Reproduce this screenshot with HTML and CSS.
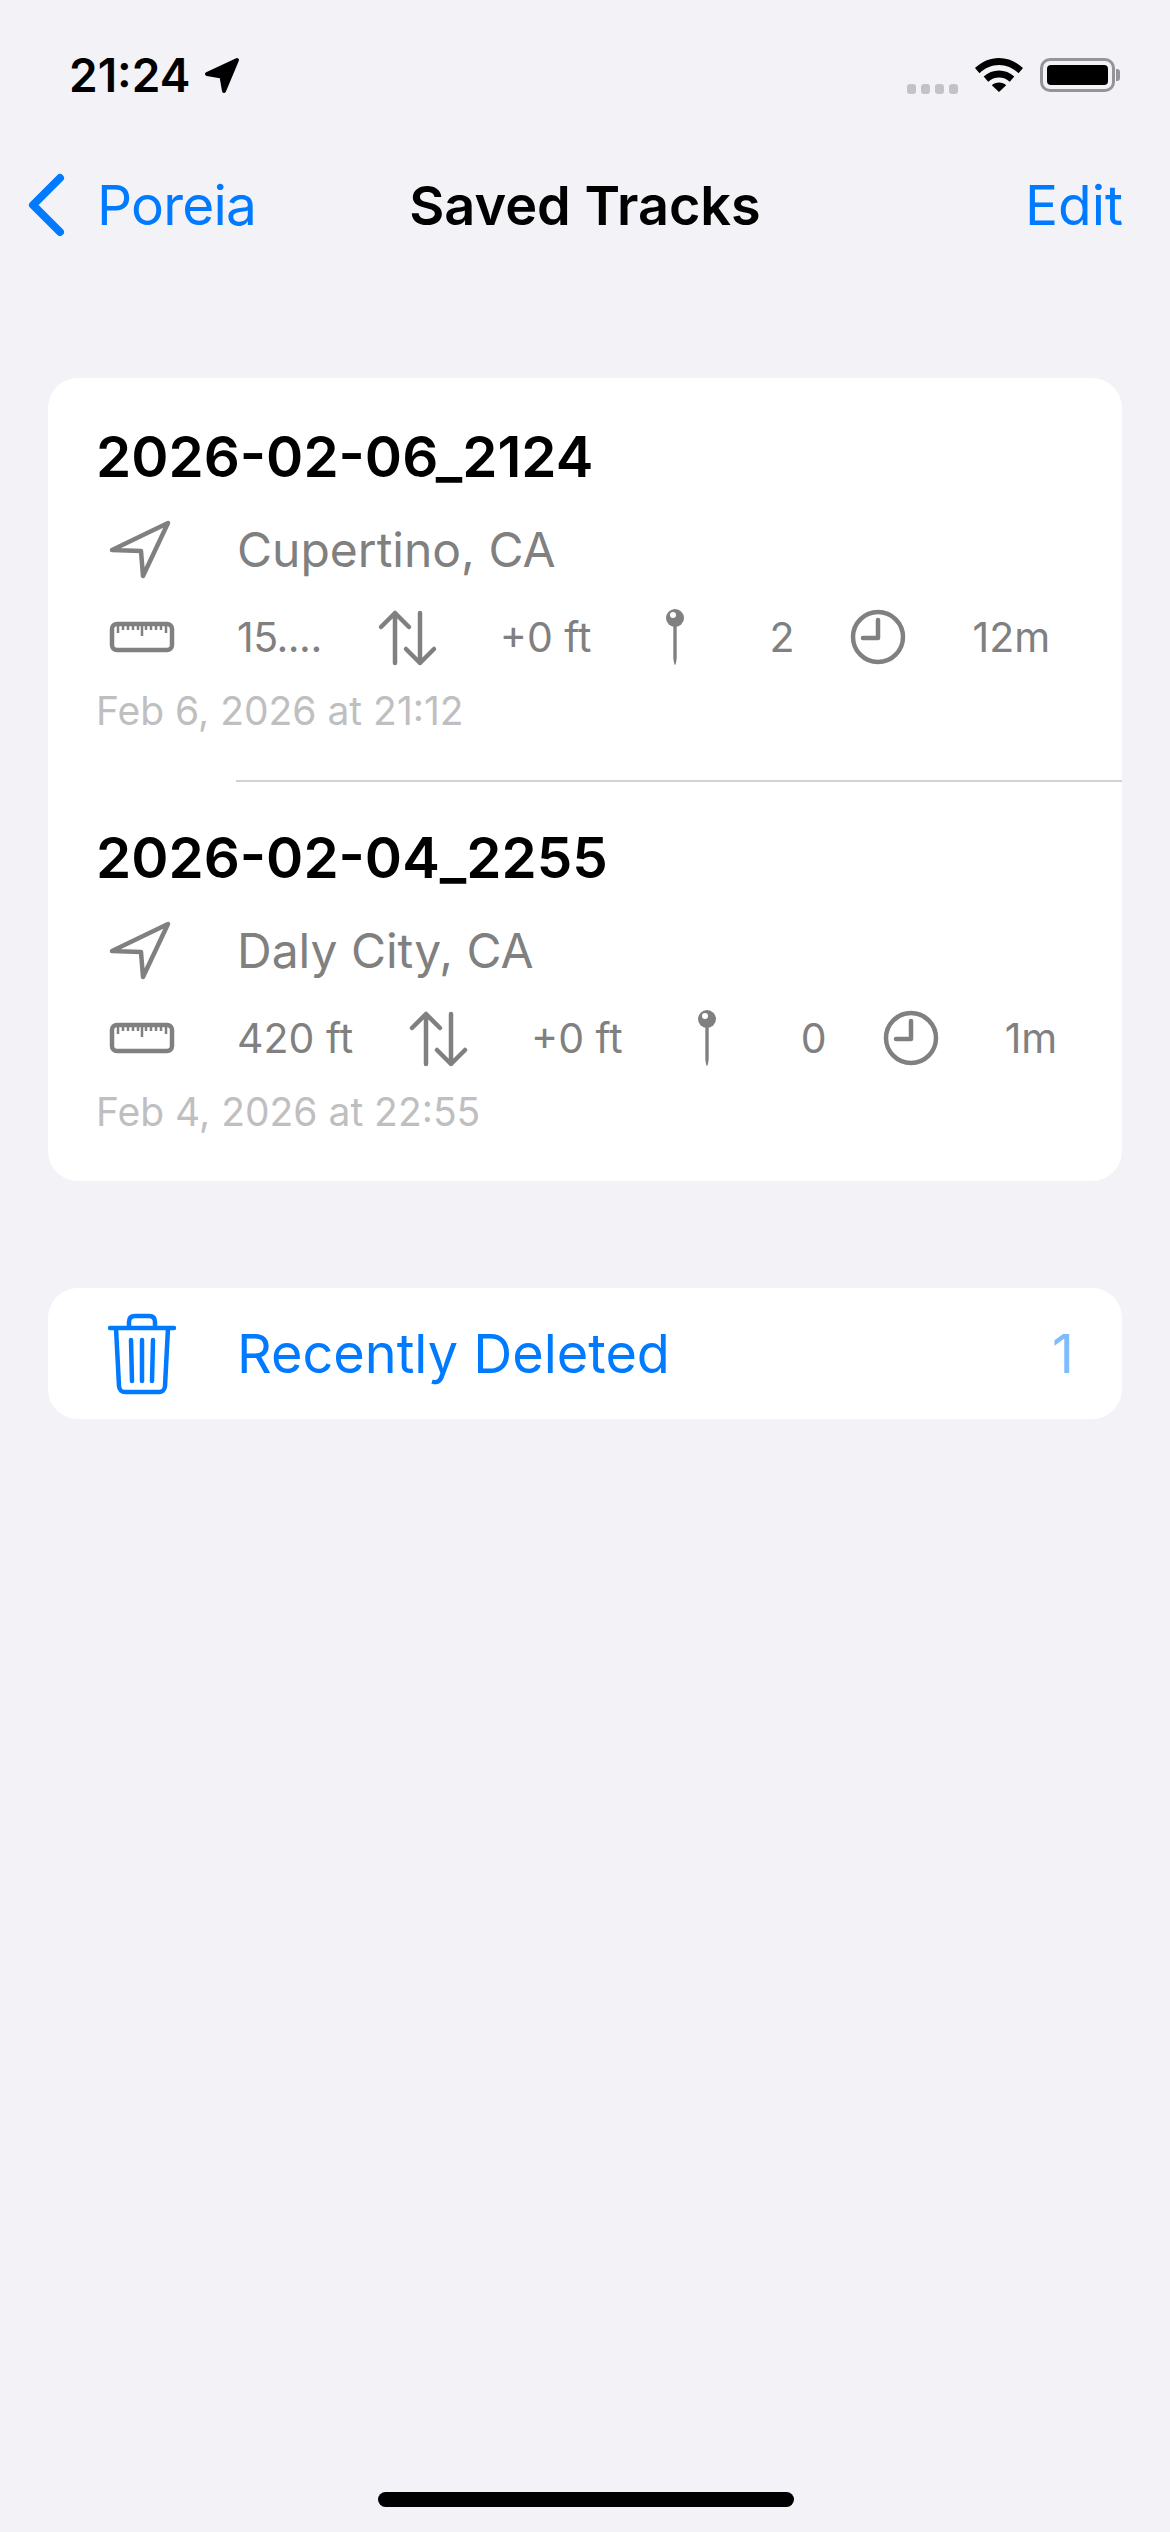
FILE: index.html
```html
<!DOCTYPE html>
<html lang="en">
<head>
  <meta charset="UTF-8">
  <meta name="viewport" content="width=device-width, initial-scale=1.0">
  <title>Saved Tracks</title>
  <link rel="stylesheet" href="styles.css">
</head>
<body>
  <div class="screen">
    <div class="status-bar">
      <div class="status-left">
        <span class="time">21:24</span>
        <svg class="status-arrow" viewBox="0 0 36 36"><path class="fill-black status-arrow-shape" d="M33 3 3 17l14.500 2.500L20 34Z"/></svg>
      </div>
      <div class="status-right">
        <div class="signal"><i></i><i></i><i></i><i></i></div>
        <svg class="wifi" viewBox="0 0 48 34">
          <path class="fill-black" d="M24 0C15 0 7 3.500 0 10l4.500 5.200C10 10 16.500 7 24 7s14 3 19.500 8.200L48 10C41 3.500 33 0 24 0Z"/>
          <path class="fill-black" d="M24 12.500c-5.800 0-11 2.200-15.300 6l4.500 5.200c3-2.700 6.700-4.200 10.800-4.200s7.800 1.500 10.800 4.200l4.500-5.200c-4.300-3.800-9.500-6-15.300-6Z"/>
          <path class="fill-black" d="M24 24.500c-2.800 0-5.300 1-7.200 2.800L24 34l7.200-6.700c-1.900-1.800-4.400-2.800-7.200-2.800Z"/>
        </svg>
        <div class="battery"><div class="battery-level"></div></div>
        <div class="battery-nub"></div>
      </div>
    </div>

    <div class="nav-bar">
      <div class="nav-back">
        <svg class="chevron" viewBox="0 0 39 64"><path class="stroke-blue" d="M33 5 6 32l27 27"/></svg>
        <span class="nav-back-label">Poreia</span>
      </div>
      <div class="nav-title">Saved Tracks</div>
      <div class="nav-edit">Edit</div>
    </div>

    <div class="content">
      <div class="card">
        <div class="track">
          <div class="track-name">2026-02-06_2124</div>
          <div class="track-place">
            <svg class="place-icon" viewBox="0 0 64 60"><path class="stroke-gray" d="M4 31 60 4 35 57 33 32Z"/></svg>
            <span>Cupertino, CA</span>
          </div>
          <div class="track-stats">
            <svg class="stat-icon" viewBox="0 0 64 60"><rect class="stroke-gray" x="2" y="17" width="60" height="26" rx="5"/><path class="stroke-gray thin" d="M8 18v8M13 18v5M18 18v5M23 18v5M28 18v5M32 18v11M36 18v5M41 18v5M46 18v5M51 18v5M56 18v8"/></svg>
            <span class="stat-text stat-clipped">15....</span>
            <svg class="stat-icon" viewBox="0 0 64 60"><path class="stroke-gray" d="M21 56V6M7 20 21 6l14 14M46 6v50M32 42l14 14 14-14"/></svg>
            <span class="stat-text">+0 ft</span>
            <svg class="stat-icon" viewBox="0 0 64 60"><circle class="fill-gray" cx="32" cy="11" r="9"/><circle class="fill-white" cx="30" cy="8" r="3"/><path class="fill-gray" d="M30.300 18h3.400v32c0 3-1 8-1.700 8s-1.700-5-1.700-8Z"/></svg>
            <span class="stat-text">2</span>
            <svg class="stat-icon" viewBox="0 0 64 60"><circle class="stroke-gray" cx="32" cy="30" r="25"/><path class="stroke-gray" d="M32 13v18H17"/></svg>
            <span class="stat-text">12m</span>
          </div>
          <div class="track-date">Feb 6, 2026 at 21:12</div>
        </div>
        <div class="divider"></div>
        <div class="track track-next">
          <div class="track-name">2026-02-04_2255</div>
          <div class="track-place">
            <svg class="place-icon" viewBox="0 0 64 60"><path class="stroke-gray" d="M4 31 60 4 35 57 33 32Z"/></svg>
            <span>Daly City, CA</span>
          </div>
          <div class="track-stats">
            <svg class="stat-icon" viewBox="0 0 64 60"><rect class="stroke-gray" x="2" y="17" width="60" height="26" rx="5"/><path class="stroke-gray thin" d="M8 18v8M13 18v5M18 18v5M23 18v5M28 18v5M32 18v11M36 18v5M41 18v5M46 18v5M51 18v5M56 18v8"/></svg>
            <span class="stat-text">420 ft</span>
            <svg class="stat-icon" viewBox="0 0 64 60"><path class="stroke-gray" d="M21 56V6M7 20 21 6l14 14M46 6v50M32 42l14 14 14-14"/></svg>
            <span class="stat-text">+0 ft</span>
            <svg class="stat-icon" viewBox="0 0 64 60"><circle class="fill-gray" cx="32" cy="11" r="9"/><circle class="fill-white" cx="30" cy="8" r="3"/><path class="fill-gray" d="M30.300 18h3.400v32c0 3-1 8-1.700 8s-1.700-5-1.700-8Z"/></svg>
            <span class="stat-text">0</span>
            <svg class="stat-icon" viewBox="0 0 64 60"><circle class="stroke-gray" cx="32" cy="30" r="25"/><path class="stroke-gray" d="M32 13v18H17"/></svg>
            <span class="stat-text">1m</span>
          </div>
          <div class="track-date">Feb 4, 2026 at 22:55</div>
        </div>
      </div>

      <div class="card deleted-row">
        <svg class="trash" viewBox="0 0 68 80">
          <path class="stroke-blue thin-blue" d="M2 14h64M8 14l3 58c.2 4 3 6 6 6h34c3 0 5.800-2 6-6l3-58M21 14V8c0-4 2-6 6-6h14c4 0 6 2 6 6v6M23 26l1 41M34 26v41M45 26l-1 41"/>
        </svg>
        <span class="deleted-label">Recently Deleted</span>
        <span class="deleted-count">1</span>
      </div>
    </div>

    <div class="home-indicator"></div>
  </div>
</body>
</html>
```

FILE: styles.css
```css
* { box-sizing: border-box; }
html, body { margin: 0; padding: 0; }
body { background: #f2f2f7; font-family: "Inter", "Liberation Sans", sans-serif; }
.screen { position: relative; width: 1170px; height: 2532px; overflow: hidden; background: #f2f2f7; }

svg { display: block; flex: none; overflow: visible; }
.fill-black { fill: #000; }
.fill-gray { fill: #808080; }
.fill-white { fill: #fff; }
.stroke-gray { fill: none; stroke: #808080; stroke-width: 4.5; stroke-linecap: round; stroke-linejoin: round; }
.stroke-gray.thin { stroke-width: 2.500; stroke-linecap: butt; }
.stroke-blue { fill: none; stroke: #007aff; stroke-width: 8; stroke-linecap: round; stroke-linejoin: round; }
.stroke-blue.thin-blue { stroke-width: 4.500; }

/* status bar */
.status-bar { height: 150px; display: flex; align-items: center; justify-content: space-between; padding: 0 50px 0 69px; }
.status-left { display: flex; align-items: center; gap: 14px; }
.time { font-size: 46px; font-weight: 600; color: #000; }
.status-arrow { width: 36px; height: 36px; }
.status-arrow-shape { stroke: #000; stroke-width: 4; stroke-linejoin: round; }
.status-right { display: flex; align-items: center; }
.signal { display: flex; gap: 5px; margin: 28px 17px 0 0; }
.signal i { display: block; width: 9px; height: 10px; border-radius: 3px; background: #c2c2c8; }
.wifi { width: 48px; height: 34px; margin-right: 17px; }
.battery { width: 75px; height: 34px; padding: 4px; border: 3px solid #949499; border-radius: 10px; }
.battery-level { height: 100%; background: #000; border-radius: 4px; }
.battery-nub { width: 4px; height: 12px; margin-left: 1px; background: #949499; border-radius: 0 3px 3px 0; }

/* nav bar */
.nav-bar { height: 110px; display: grid; grid-template-columns: 1fr auto 1fr; align-items: center; padding: 0 27px; font-size: 55px; }
.nav-back { display: flex; align-items: center; gap: 31px; color: #007aff; }
.nav-back-label { letter-spacing: -0.8px; }
.chevron { width: 39px; height: 64px; }
.nav-title { font-size: 54px; font-weight: 600; color: #000; }
.nav-edit { padding-right: 20px; text-align: right; color: #007aff; }

/* lists */
.content { padding: 118px 48px 0; }
.card { background: #fff; border-radius: 30px; }
.card + .card { margin-top: 107px; }
.track { padding: 44px 0 44px 48px; }
.track-next { padding-top: 41px; }
.divider { height: 2px; margin-left: 188px; background: #d2d2d5; }
.track-name { height: 70px; line-height: 70px; font-size: 56.5px; font-weight: 600; color: #000; }
.track-place { height: 70px; margin-top: 22px; display: flex; align-items: center; font-size: 48px; color: #808080; }
.place-icon { width: 64px; height: 60px; margin: 0 65px 0 12px; }
.track-stats { height: 60px; margin-top: 23px; display: flex; align-items: center; font-size: 41px; color: #808080; }
.stat-icon { width: 64px; height: 60px; margin-right: 62px; }
.stat-icon:first-child { margin-left: 14px; margin-right: 63px; }
.stat-text { margin-right: 52px; white-space: nowrap; }
.stat-clipped { letter-spacing: -0.5px; }
.track-date { height: 50px; margin-top: 19px; line-height: 50px; font-size: 39px; color: #bfbfc1; }

.deleted-row { height: 131px; display: flex; align-items: center; padding: 0 48px 0 60px; color: #007aff; }
.trash { width: 68px; height: 80px; margin-right: 61px; }
.deleted-label { flex: 1; font-size: 54px; }
.deleted-count { font-size: 54px; color: #7fbcff; }

.home-indicator { position: absolute; left: 378px; bottom: 25px; width: 416px; height: 15px; border-radius: 8px; background: #000; }
```
